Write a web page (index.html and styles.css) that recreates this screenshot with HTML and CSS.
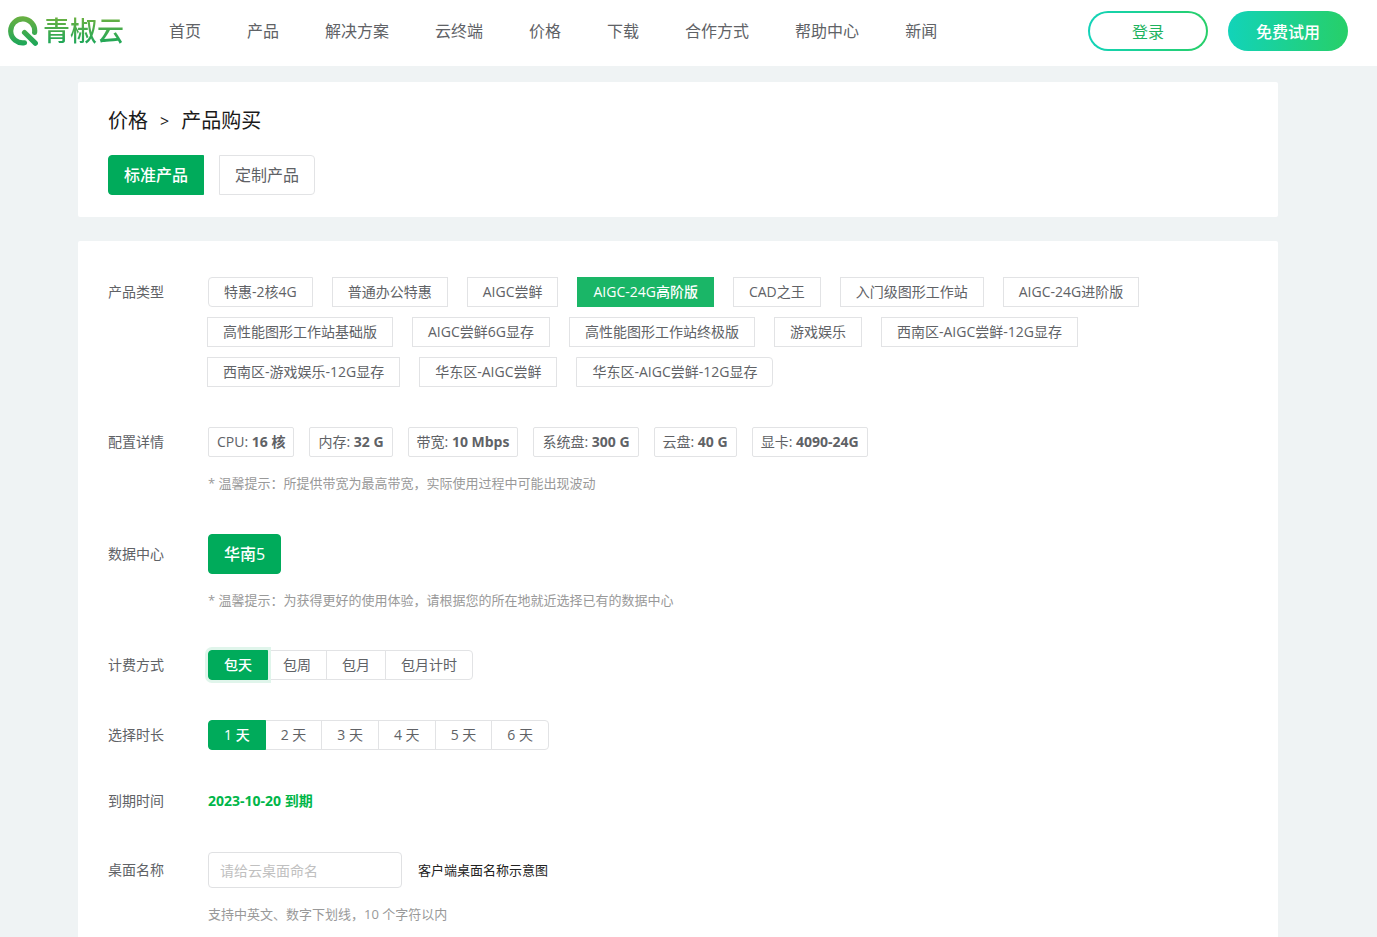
FILE: index.html
```html
<!DOCTYPE html>
<html lang="zh-CN">
<head>
<meta charset="utf-8">
<title>青椒云 - 产品购买</title>
<link rel="stylesheet" href="styles.css">
</head>
<body>
<header class="header">
  <a class="logo" href="#">
    <svg class="logo-mark" viewBox="0 0 30 30" aria-hidden="true">
      <defs><linearGradient id="leaf" gradientUnits="userSpaceOnUse" x1="0" y1="0" x2="0" y2="30"><stop offset="0" stop-color="#6bb041"/><stop offset="1" stop-color="#1aa65a"/></linearGradient></defs>
      <path d="M16.500 26.800A12 12 0 1 1 26.600 16.500M16.500 16.500L27.300 27.200" fill="none" stroke="url(#leaf)" stroke-width="5.200" stroke-linecap="round"/>
    </svg>
    <span class="logo-text">青椒云</span>
  </a>
  <nav class="nav">
    <a href="#">首页</a><a href="#">产品</a><a href="#">解决方案</a><a href="#">云终端</a><a href="#">价格</a><a href="#">下载</a><a href="#">合作方式</a><a href="#">帮助中心</a><a href="#">新闻</a>
  </nav>
  <div class="actions">
    <button class="pill pill-outline" type="button">登录</button>
    <button class="pill pill-solid" type="button">免费试用</button>
  </div>
</header>
<main class="page">
  <section class="card intro">
    <h1 class="crumbs"><span>价格</span><span class="sep">&gt;</span><span>产品购买</span></h1>
    <div class="group large spaced">
      <label><input type="radio" name="kind" checked><span>标准产品</span></label>
      <label><input type="radio" name="kind"><span>定制产品</span></label>
    </div>
  </section>
  <form class="card order">
    <div class="row">
      <div class="row-label">产品类型</div>
      <div class="row-body">
        <div class="group tags">
          <label><input type="radio" name="type"><span>特惠-2核4G</span></label>
          <label><input type="radio" name="type"><span>普通办公特惠</span></label>
          <label><input type="radio" name="type"><span>AIGC尝鲜</span></label>
          <label><input type="radio" name="type" checked><span>AIGC-24G高阶版</span></label>
          <label><input type="radio" name="type"><span>CAD之王</span></label>
          <label><input type="radio" name="type"><span>入门级图形工作站</span></label>
          <label><input type="radio" name="type"><span>AIGC-24G进阶版</span></label>
          <label><input type="radio" name="type"><span>高性能图形工作站基础版</span></label>
          <label><input type="radio" name="type"><span>AIGC尝鲜6G显存</span></label>
          <label><input type="radio" name="type"><span>高性能图形工作站终极版</span></label>
          <label><input type="radio" name="type"><span>游戏娱乐</span></label>
          <label><input type="radio" name="type"><span>西南区-AIGC尝鲜-12G显存</span></label>
          <label><input type="radio" name="type"><span>西南区-游戏娱乐-12G显存</span></label>
          <label><input type="radio" name="type"><span>华东区-AIGC尝鲜</span></label>
          <label><input type="radio" name="type"><span>华东区-AIGC尝鲜-12G显存</span></label>
        </div>
      </div>
    </div>
    <div class="row">
      <div class="row-label">配置详情</div>
      <div class="row-body">
        <div class="chips">
          <span class="chip">CPU: <b>16 核</b></span>
          <span class="chip">内存: <b>32 G</b></span>
          <span class="chip">带宽: <b>10 Mbps</b></span>
          <span class="chip">系统盘: <b>300 G</b></span>
          <span class="chip">云盘: <b>40 G</b></span>
          <span class="chip">显卡: <b>4090-24G</b></span>
        </div>
        <p class="hint config-hint">* 温馨提示：所提供带宽为最高带宽，实际使用过程中可能出现波动</p>
      </div>
    </div>
    <div class="row">
      <div class="row-label tall">数据中心</div>
      <div class="row-body">
        <div class="group large">
          <label><input type="radio" name="region" checked><span>华南5</span></label>
        </div>
        <p class="hint">* 温馨提示：为获得更好的使用体验，请根据您的所在地就近选择已有的数据中心</p>
      </div>
    </div>
    <div class="row">
      <div class="row-label">计费方式</div>
      <div class="row-body">
        <div class="group ring">
          <label><input type="radio" name="billing" checked><span>包天</span></label>
          <label><input type="radio" name="billing"><span>包周</span></label>
          <label><input type="radio" name="billing"><span>包月</span></label>
          <label><input type="radio" name="billing"><span>包月计时</span></label>
        </div>
      </div>
    </div>
    <div class="row">
      <div class="row-label">选择时长</div>
      <div class="row-body">
        <div class="group">
          <label><input type="radio" name="days" checked><span>1 天</span></label>
          <label><input type="radio" name="days"><span>2 天</span></label>
          <label><input type="radio" name="days"><span>3 天</span></label>
          <label><input type="radio" name="days"><span>4 天</span></label>
          <label><input type="radio" name="days"><span>5 天</span></label>
          <label><input type="radio" name="days"><span>6 天</span></label>
        </div>
      </div>
    </div>
    <div class="row">
      <div class="row-label short">到期时间</div>
      <div class="row-body"><strong class="expires">2023-10-20 到期</strong></div>
    </div>
    <div class="row">
      <label class="row-label field" for="desktop-name">桌面名称</label>
      <div class="row-body">
        <div class="name-line">
          <input class="name-input" id="desktop-name" type="text" placeholder="请给云桌面命名">
          <a class="example" href="#">客户端桌面名称示意图</a>
        </div>
        <p class="hint">支持中英文、数字下划线，10 个字符以内</p>
      </div>
    </div>
  </form>
</main>
</body>
</html>
```
FILE: styles.css
```css
* { box-sizing: border-box; }
body {
  margin: 0;
  background: #eff3f4;
  color: #606266;
  font: 14px/20px "Open Sans", "Noto Sans CJK SC", sans-serif;
}
button, input { font-family: inherit; }
a { color: inherit; text-decoration: none; }

.header {
  display: flex;
  align-items: center;
  min-height: 66px;
  padding: 0 29px 4px 8px;
  background: #fff;
}
.logo { display: flex; align-items: center; gap: 5px; }
.logo-mark { width: 30px; height: 30px; }
.logo-text {
  font-size: 27px;
  font-weight: 500;
  line-height: 40px;
  white-space: nowrap;
  color: transparent;
  background: linear-gradient(#6bb041 15%, #1aa65a 85%);
  -webkit-background-clip: text;
  background-clip: text;
}
.nav { display: flex; gap: 46px; margin-left: 45px; font-size: 16px; line-height: 24px; white-space: nowrap; }
.actions { display: flex; gap: 20px; margin-left: auto; }
.pill {
  width: 120px;
  height: 40px;
  padding: 0;
  border: 2px solid transparent;
  border-radius: 20px;
  font-size: 16px;
}
.pill-outline {
  color: #1fb35f;
  background: linear-gradient(#fff, #fff) padding-box, linear-gradient(90deg, #12d3b9, #27cf68) border-box;
}
.pill-solid {
  color: #fff;
  font-weight: 500;
  background: linear-gradient(90deg, #12d3b9, #27cf68) border-box;
}

.page { max-width: 1221px; margin: 0 auto; padding: 16px 21px 0 0; }
.card { background: #fff; border-radius: 2px; }
.intro { padding: 24px 30px 22px; margin-bottom: 24px; }
.crumbs {
  display: flex;
  gap: 12px;
  margin: 0 0 19px;
  color: #1a1a1a;
  font-size: 20px;
  font-weight: 400;
  line-height: 30px;
}
.sep { font-size: 16px; }
.order { padding: 36px 30px 16px; }

.row { display: flex; }
.row + .row { margin-top: 40px; }
.row-label { flex: 0 0 100px; line-height: 30px; }
.row-label.tall { line-height: 40px; }
.row-label.short { line-height: 22px; }
.row-label.field { line-height: 36px; }
.row-body { flex: 1; min-width: 0; }

.group { display: flex; flex-wrap: wrap; }
.group label { position: relative; display: flex; }
.group label + label { margin-left: -1px; }
.group input { position: absolute; inset: 0; margin: 0; opacity: 0; }
.group span {
  padding: 0 15px;
  border: 1px solid #e2e3e5;
  background: #fff;
  line-height: 28px;
  white-space: nowrap;
}
.group label:first-child span { border-radius: 4px 0 0 4px; }
.group label:last-child span { border-radius: 0 4px 4px 0; }
.group label:only-child span { border-radius: 4px; }
.group input:checked + span {
  position: relative;
  z-index: 1;
  border-color: #00ab5b;
  background: #00ab5b;
  color: #fff;
  font-weight: 500;
}
.group.large span { font-size: 16px; line-height: 38px; }
.group.spaced { column-gap: 16px; }
.group.tags { gap: 10px 20px; }
.group.tags input:checked + span { border-color: #1ab667; background: #1ab667; }
.group.ring input:checked + span { box-shadow: 0 0 0 3px #e0f5eb; }

.chips { display: flex; flex-wrap: wrap; gap: 15px; }
.chip { padding: 0 8px; border: 1px solid #e2e3e5; border-radius: 2px; line-height: 28px; white-space: nowrap; }
.hint { margin: 16px 0 0; color: #999; font-size: 13px; }
.config-hint { padding-bottom: 1px; }
.expires { color: #00b649; line-height: 22px; }
.name-line { display: flex; align-items: center; gap: 16px; }
.name-input {
  width: 194px;
  height: 36px;
  padding: 0 11px;
  border: 1px solid #e0e1e3;
  border-radius: 4px;
  background: #fff;
  font-size: 14px;
}
.name-input::placeholder { color: #c0c0c0; }
.example { color: #222; font-size: 13px; }
```
